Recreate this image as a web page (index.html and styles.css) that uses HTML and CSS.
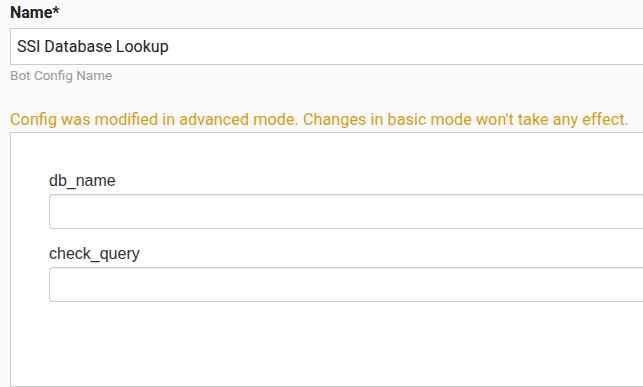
FILE: index.html
```html
<!DOCTYPE html>
<html lang="en">
<head>
  <meta charset="UTF-8">
  <title>Bot Config</title>
  <link rel="stylesheet" href="styles.css">
</head>
<body>
  <div class="form-group">
    <label class="field-label" for="name">Name*</label>
    <input class="field-input" type="text" id="name" value="SSI Database Lookup">
    <div class="hint">Bot Config Name</div>
  </div>

  <p class="warning">Config was modified in advanced mode. Changes in basic mode won't take any effect.</p>

  <div class="config-box">
    <div class="param">
      <label for="db_name">db_name</label>
      <input type="text" id="db_name">
    </div>
    <div class="param">
      <label for="check_query">check_query</label>
      <input type="text" id="check_query">
    </div>
  </div>
</body>
</html>
```

FILE: styles.css
```css
html, body {
  height: 100%;
}
body {
  margin: 0;
  padding: 0 0 0 10px;
  background-color: #fafafa;
  font-family: Roboto, "Noto Sans", sans-serif;
  overflow: hidden;
  display: flex;
  flex-direction: column;
}
.form-group {
  padding-top: 3px;
}
.field-label {
  display: block;
  font-size: 16px;
  font-weight: bold;
  color: #222;
  line-height: 20px;
  margin-bottom: 5px;
}
.field-input {
  display: block;
  box-sizing: border-box;
  width: 100%;
  height: 37px;
  border: 1px solid #ccc;
  border-right: 0;
  background: #fff;
  padding: 0 6px;
  font-family: Roboto, sans-serif;
  font-size: 16px;
  color: #222;
  outline: none;
}
.hint {
  font-size: 13.5px;
  color: #999;
  margin-top: 2px;
  line-height: 16px;
}
.warning {
  margin: 27px 0 0;
  font-size: 16.3px;
  line-height: 19px;
  color: #d69e14;
  white-space: nowrap;
}
.config-box {
  flex: 1;
  margin-top: 3px;
  border: 1px solid #ccc;
  border-right: 0;
  background: #fff;
  padding: 39px 0 0 38px;
}
.param {
  margin-bottom: 16px;
}
.param label {
  display: block;
  font-family: "Liberation Sans", Arial, sans-serif;
  font-size: 16px;
  color: #333;
  line-height: 18px;
  margin-bottom: 4px;
}
.param input {
  display: block;
  box-sizing: border-box;
  width: 100%;
  height: 35px;
  border: 1px solid #ccc;
  border-right: 0;
  border-radius: 4px 0 0 4px;
  box-shadow: inset 0 1px 1px rgba(0,0,0,0.075);
  background: #fff;
  outline: none;
}
```
